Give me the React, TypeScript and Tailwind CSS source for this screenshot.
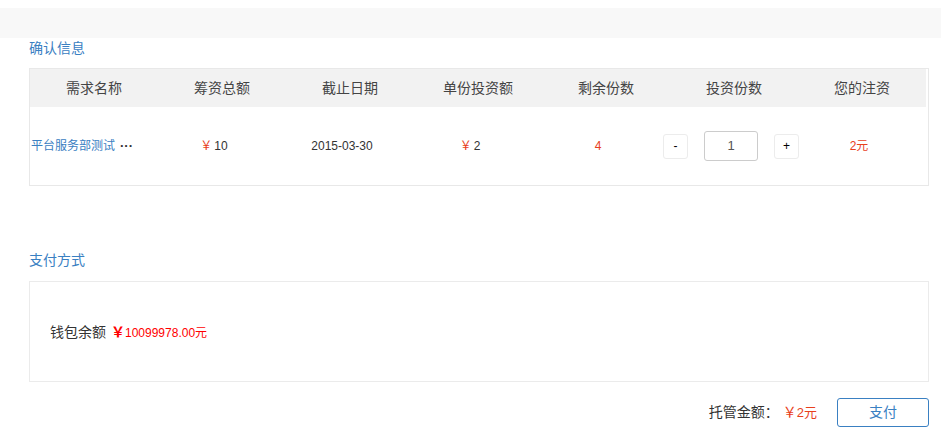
import React from "react";

const cjk = "font-['Liberation_Sans','Noto_Sans_CJK_SC',sans-serif]";

const headers = ["需求名称", "筹资总额", "截止日期", "单份投资额", "剩余份数", "投资份数", "您的注资"];

export default function App() {
  return (
    <div className={`w-[941px] h-[429px] bg-white overflow-hidden ${cjk}`}>
      <div className="mt-2 h-[30px] bg-[#f8f8f8]" />
      <div className="pl-[29px] pr-[12px]">
        <div className="text-[14px] leading-[20px] text-[#3a80c2] mb-[10px]">确认信息</div>
        <div className="border border-[#e8e8e8]">
          <div className="flex h-[38px] bg-[#f2f2f2] items-center mr-[2px]">
            {headers.map((h) => (
              <div key={h} className="w-[128px] text-center text-[14px] text-[#444]">
                {h}
              </div>
            ))}
          </div>
          <div className="flex h-[78px] items-center text-[12px] text-[#333]">
            <div className="w-[128px] pl-[1px] flex items-center whitespace-nowrap">
              <span className="text-[#3a80c2] text-[12px]">平台服务部测试</span>
              <span className="ml-[5px] font-bold text-[13px] text-[#333]">···</span>
            </div>
            <div className="w-[128px] pr-[16px] text-center">
              <span className="text-[#e8401c]">￥</span>
              <span className="ml-[2px]">10</span>
            </div>
            <div className="w-[128px] pr-[16px] text-center">2015-03-30</div>
            <div className="w-[128px] pr-[16px] text-center">
              <span className="text-[#e8401c]">￥</span>
              <span className="ml-[2px]">2</span>
            </div>
            <div className="w-[128px] pr-[16px] text-center text-[#e8401c]">4</div>
            <div className="w-[128px] flex justify-center items-center gap-4 -ml-[3px]">
              <button className="shrink-0 w-[25px] h-[25px] border border-[#ececec] rounded-[3px] bg-white text-[12px] text-black leading-none">
                -
              </button>
              <div className="shrink-0 w-[54px] h-[30px] border border-[#cccccc] rounded-[3px] flex items-center justify-center text-[13px] text-[#555]">
                1
              </div>
              <button className="shrink-0 w-[25px] h-[25px] border border-[#ececec] rounded-[3px] bg-white text-[12px] text-black leading-none">
                +
              </button>
            </div>
            <div className="w-[128px] text-center text-[#e8401c]">2元</div>
          </div>
        </div>

        <div className="mt-[64px] text-[14px] leading-[20px] text-[#3a80c2] mb-[11px]">支付方式</div>
        <div className="border border-[#ebebeb] h-[101px] flex items-center pl-[20px] pt-[2px]">
          <span className="text-[14px] text-[#333]">钱包余额</span>
          <span className="ml-[5px] text-[#ff0000] text-[12px] flex items-center">
            <span className="text-[14px] font-bold">￥</span>
            <span>10099978.00元</span>
          </span>
        </div>

        <div className="mt-[16px] flex justify-end items-center">
          <span className="text-[14px] text-[#333]">托管金额：</span>
          <span className="ml-[4px] text-[#e8401c] text-[13px] flex items-center">
            <span className="text-[14px]">￥</span>
            <span>2元</span>
          </span>
          <button className="ml-[20px] w-[92px] h-[29px] border border-[#3a80c2] rounded-[3px] text-[14px] text-[#3a80c2] bg-white">
            支付
          </button>
        </div>
      </div>
    </div>
  );
}
